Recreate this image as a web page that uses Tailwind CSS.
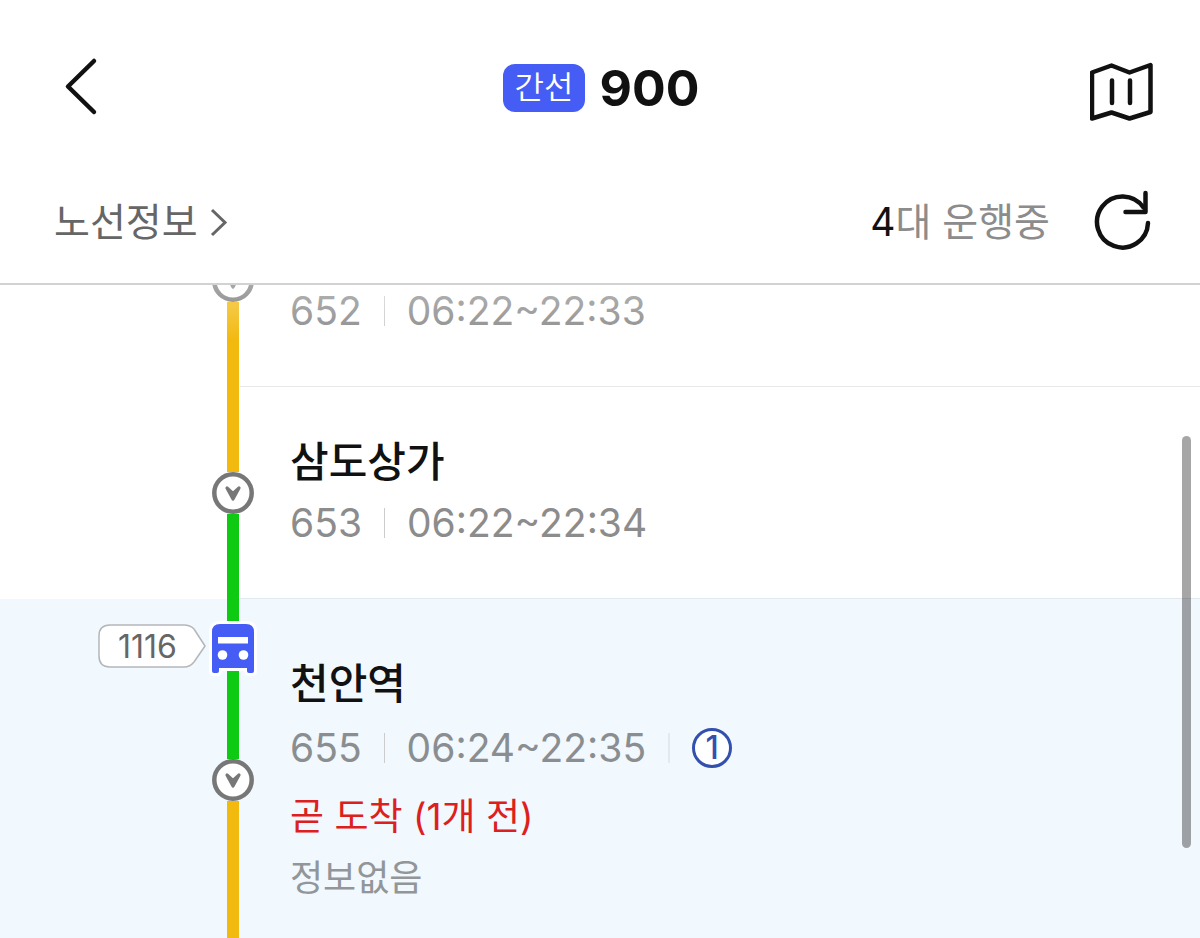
<!DOCTYPE html>
<html lang="ko">
<head>
  <meta charset="UTF-8" />
  <meta name="viewport" content="width=device-width, initial-scale=1.0"/>
  <title>간선 900</title>
  <script src="https://cdn.jsdelivr.net/npm/@tailwindcss/browser@4"></script>
</head>
<body class="flex h-screen flex-col overflow-hidden bg-white font-['Inter','Noto_Sans_CJK_KR',sans-serif] text-[#111]">

  <header class="grid h-[176px] shrink-0 grid-cols-[1fr_auto_1fr] items-center pr-[46px] pl-12">
    <button type="button" aria-label="뒤로" class="justify-self-start">
      <svg class="h-16 w-16" viewBox="0 0 64 64" fill="none" stroke="currentColor" stroke-width="4.500" stroke-linecap="round" stroke-linejoin="round">
        <path d="M46 5L20 30.500L46 56" />
      </svg>
    </button>
    <h1 class="flex items-center gap-3.5">
      <span class="flex h-12 items-center rounded-xl bg-[#455df5] px-3 text-[32px] leading-10 font-[350] text-white">간선</span>
      <span class="text-[50px] leading-[60px] font-bold">900</span>
    </h1>
    <button type="button" aria-label="지도" class="justify-self-end">
      <svg class="h-18 w-16" viewBox="0 0 64 72" fill="none" stroke="currentColor" stroke-width="4.500" stroke-linecap="round" stroke-linejoin="round">
        <path d="M2 20.500L21.500 13.500L39.500 20.500L60.500 13V60L39.500 66.500L21.500 60.500L2 66.500Z" />
        <path d="M22 28.500V51M40 28.500V51" />
      </svg>
    </button>
  </header>

  <section class="flex h-[109px] shrink-0 items-center justify-between border-b-2 border-[#d2d2d2] pr-[46px] pb-4 pl-[54px]">
    <a href="#" class="flex items-center gap-3 text-[39px] leading-[52px] text-[#666]">
      노선정보
      <svg class="h-8 w-5" viewBox="0 0 20 32" fill="none" stroke="currentColor" stroke-width="3">
        <path d="M2 4L15 16.500L2 29" />
      </svg>
    </a>
    <div class="flex items-center gap-11">
      <p class="text-[39px] leading-[52px] text-[#8c8c8c]"><span class="text-[#111]">4</span>대 운행중</p>
      <button type="button" aria-label="새로고침">
        <svg class="h-16 w-[60px]" viewBox="0 0 60 64" fill="none" stroke="currentColor" stroke-width="4.500" stroke-linecap="round" stroke-linejoin="round">
          <path d="M54 33A25.500 25.500 0 1 1 49.500 17.500" />
          <path d="M51.500 3V22H31.500" />
        </svg>
      </button>
    </div>
  </section>

  <main class="relative flex-1 overflow-hidden">
    <ul class="flex h-full flex-col">

      <li class="grid h-[102px] shrink-0 grid-cols-[212px_42px_1fr]">
        <div class="relative z-10 col-start-2 flex flex-col items-center">
          <svg class="-mt-[25px] h-[42px] w-[42px] shrink-0" viewBox="0 0 42 42">
            <circle cx="21" cy="21" r="18.700" fill="#fff" stroke="#777" stroke-width="4.500" />
            <path d="M15 16L21 27L27 16L21 21.500Z" fill="#777" stroke="#777" stroke-width="3.200" stroke-linejoin="round" />
          </svg>
          <div class="w-3 flex-1 bg-[#f2b90f]"></div>
        </div>
        <div class="-ml-3.5 border-b border-[#e8e8e8] pl-[50px]">
          <div class="flex h-[52px] items-center text-[39px] leading-[52px] text-[#8c8c8c]">
            <span>652</span>
            <span class="mx-[22px] h-[30px] w-px bg-[#ccc]"></span>
            <span>06:22~22:33</span>
          </div>
        </div>
      </li>

      <li class="grid h-[212px] shrink-0 grid-cols-[212px_42px_1fr]">
        <div class="relative z-10 col-start-2 flex flex-col items-center">
          <div class="h-[85px] w-3 bg-[#f2b90f]"></div>
          <svg class="h-[42px] w-[42px] shrink-0" viewBox="0 0 42 42">
            <circle cx="21" cy="21" r="18.700" fill="#fff" stroke="#777" stroke-width="4.500" />
            <path d="M15 16L21 27L27 16L21 21.500Z" fill="#777" stroke="#777" stroke-width="3.200" stroke-linejoin="round" />
          </svg>
          <div class="w-3 flex-1 bg-[#0fca12]"></div>
        </div>
        <div class="-ml-3.5 border-b border-[#e2e9ee] pt-[49px] pl-[50px]">
          <h2 class="text-[42px] leading-[52px] font-medium">삼도상가</h2>
          <div class="mt-[9px] flex h-[52px] items-center text-[39px] leading-[52px] text-[#8c8c8c]">
            <span>653</span>
            <span class="mx-[22px] h-[30px] w-px bg-[#ccc]"></span>
            <span>06:22~22:34</span>
          </div>
        </div>
      </li>

      <li class="grid flex-1 grid-cols-[212px_42px_1fr] bg-[#f1f8fe]">
        <div class="flex items-start justify-end pt-[25px] pr-1.5">
          <div class="relative h-11 w-[108px]">
            <svg class="absolute inset-0 h-full w-full" viewBox="0 0 108 44" fill="#fff" stroke="#b4b7ba" stroke-width="1.500">
              <path d="M12 1H86Q92 1 96 5L107 22L96 38Q92 43 86 43H12Q1 43 1 32V12Q1 1 12 1Z" stroke-linejoin="round" />
            </svg>
            <span class="relative block pl-5 text-[32px] leading-[46px] text-[#666]">1116</span>
          </div>
        </div>
        <div class="relative z-10 flex flex-col items-center">
          <div class="h-[22px] w-3 bg-[#0fca12]"></div>
          <svg class="h-[50px] w-12 shrink-0 overflow-visible" viewBox="0 0 48 50">
            <path d="M11 3H37Q45 3 45 11V50Q45 52 43 52H40Q38 52 38 50V47H10V50Q10 52 8 52H5Q3 52 3 50V11Q3 3 11 3Z" fill="#455df5" stroke="#fff" stroke-width="6" paint-order="stroke" stroke-linejoin="round" />
            <path d="M9 16H39V22.500H9Z" fill="#fff" />
            <circle cx="13.500" cy="34" r="4.800" fill="#fff" />
            <circle cx="34.500" cy="34" r="4.800" fill="#fff" />
          </svg>
          <div class="h-[88px] w-3 bg-[#0fca12]"></div>
          <svg class="h-[42px] w-[42px] shrink-0" viewBox="0 0 42 42">
            <circle cx="21" cy="21" r="18.700" fill="#fff" stroke="#777" stroke-width="4.500" />
            <path d="M15 16L21 27L27 16L21 21.500Z" fill="#777" stroke="#777" stroke-width="3.200" stroke-linejoin="round" />
          </svg>
          <div class="w-3 flex-1 bg-[#f2b90f]"></div>
        </div>
        <div class="-ml-3.5 pt-[59px] pl-[50px]">
          <h2 class="text-[42px] leading-[52px] font-medium">천안역</h2>
          <div class="mt-3 flex h-[52px] items-center text-[39px] leading-[52px] text-[#8a8e91]">
            <span>655</span>
            <span class="mx-[22px] h-[30px] w-px bg-[#ccc]"></span>
            <span>06:24~22:35</span>
            <span class="mx-[22px] h-[30px] w-0.5 bg-[#e4e9ed]"></span>
            <span class="flex h-10 w-10 items-center justify-center rounded-full border-3 border-[#3450ae] bg-white text-[32px] leading-8 font-medium text-[#3450ae]">1</span>
          </div>
          <p class="mt-[17px] text-[37px] leading-[52px] text-[#dc2020]">곧 도착 (1개 전)</p>
          <p class="mt-[9px] text-[36px] leading-[52px] text-[#929699]">정보없음</p>
        </div>
      </li>

    </ul>
    <!-- top fade + scroll thumb -->
    <div class="pointer-events-none absolute inset-x-0 top-0 z-20 h-14 bg-linear-to-b from-white/35 to-white/0"></div>
    <div class="absolute top-[151px] right-[9px] z-20 h-[412px] w-[9px] rounded-full bg-black/35"></div>
  </main>

</body>
</html>
